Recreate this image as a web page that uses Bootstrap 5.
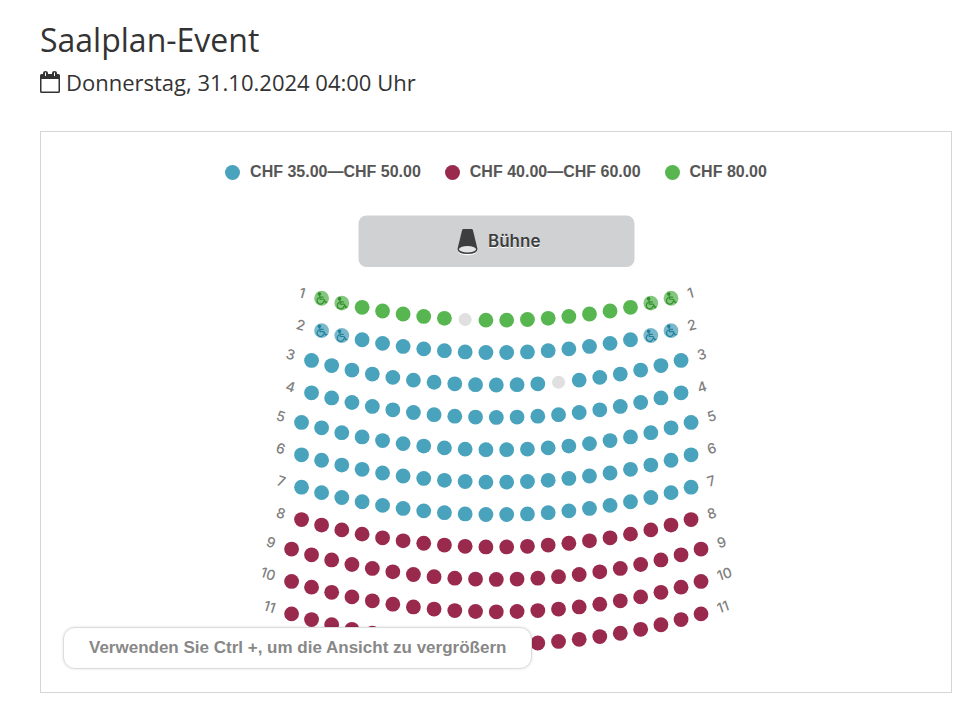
<!DOCTYPE html>
<html lang="de">
<head>
<meta charset="utf-8">
<meta name="viewport" content="width=device-width, initial-scale=1">
<title>Saalplan-Event</title>
<link rel="stylesheet" href="https://cdn.jsdelivr.net/npm/bootstrap@5.3.0/dist/css/bootstrap.min.css">
<style>
  body { font-family: "Open Sans", sans-serif; color: #333; background: #fff; }
  .page { padding: 19px 18px 19px 40px; }
  .event-title { font-size: 32px; line-height: 42px; font-weight: 400; }
  .event-date { font-size: 22px; line-height: 42px; font-weight: 400; gap: 6px; }
  .plan { border: 1px solid #d5d5d5; }
  .legend-list { gap: 24px; padding-top: 28px; font: bold 16px/24px "Liberation Sans", Arial, sans-serif; color: #565656; }
  .legend-entry { gap: 10px; }
  .dot { width: 15px; height: 15px; border-radius: 50%; }
  .dot-blue { background: #49a3bc; }
  .dot-red { background: #992a4d; }
  .dot-green { background: #58b651; }
  .blue { fill: #49a3bc; }
  .red { fill: #992a4d; }
  .green { fill: #58b651; }
  .taken { fill: #e0e0e0; }
  .access-blue { fill: #79b8ca; color: #21809b; }
  .access-green { fill: #83c67e; color: #308f2a; }
  .row-label { font: 500 14px Inter, sans-serif; fill: #808080; }
  .stage-label { font: 600 17px Inter, sans-serif; fill: #3d3e40; }
  .stage-shine { fill: #fff; }
  .zoom-hint { left: 22px; bottom: 23px; padding: 8px 25px; border: 1px solid #dcdcdc; border-radius: 12px; background: #fff; box-shadow: 0 0 3px rgba(0,0,0,.12); color: #888; font: bold 17px/24px "Liberation Sans", Arial, sans-serif; }
</style>
</head>
<body>
<main class="page">
  <h1 class="event-title m-0">Saalplan-Event</h1>
  <p class="event-date d-flex align-items-center m-0 mb-4 pb-1">
    <svg width="20" height="22" viewBox="0 0 20 22" aria-hidden="true"><path fill="#333" fill-rule="evenodd" d="M2 3H3V2Q3 0 5.500 0T8 2V3H12V2Q12 0 14.500 0T17 2V3H18.500Q20 3 20 4.500V20.500Q20 22 18.500 22H1.500Q0 22 0 20.500V4.500Q0 3 1.500 3ZM1.500 8V20.500H18.500V8ZM5 1.500V5H6V1.500ZM14 1.500V5H15V1.500Z"/></svg>
    <span>Donnerstag, 31.10.2024 04:00 Uhr</span>
  </p>
  <section class="plan position-relative" aria-label="Saalplan">
    <ul class="legend-list list-unstyled d-flex flex-wrap justify-content-center m-0">
      <li class="legend-entry d-flex align-items-center"><span class="dot dot-blue"></span>CHF 35.00—CHF 50.00</li>
      <li class="legend-entry d-flex align-items-center"><span class="dot dot-red"></span>CHF 40.00—CHF 60.00</li>
      <li class="legend-entry d-flex align-items-center"><span class="dot dot-green"></span>CHF 80.00</li>
    </ul>
    <svg id="hall" class="d-block w-100" viewBox="0 0 910 508" role="img" aria-label="Sitzplätze">
      <defs>
        <g id="wheelchair" fill="none" stroke="currentColor" stroke-width="1.200" stroke-linecap="round" stroke-linejoin="round">
          <circle cx="-2.200" cy="-4.300" r="1.200" fill="currentColor"/>
          <path d="M-2-3L-1.500 1H2.300L4 4.300L5.200 3.800M-1.600-1.200H1.500M-3-.4A3.400 3.400 0 1 0 2.200 3.200"/>
        </g>
      </defs>
      <rect x="317.500" y="31.500" width="276" height="51.500" rx="8" fill="#d0d1d3"/>
      <g transform="translate(426.500 57)">
        <path fill="#fff" d="M-10 8L10 8Q10 14.200 0 14.200T-10 8Z"/>
        <path fill="#3d3e40" d="M-4-12H4Q5-12 5.400-11L10 8Q10 13 0 13T-10 8L-5.400-11Q-5-12-4-12Z"/>
        <ellipse cy="8.300" rx="8.500" ry="3.200" fill="#e4e4e5"/>
      </g>
      <text class="stage-label stage-shine" x="447" y="64">Bühne</text>
      <text class="stage-label" x="447" y="63">Bühne</text>
    </svg>
    <div class="zoom-hint position-absolute">Verwenden Sie Ctrl +, um die Ansicht zu vergrößern</div>
  </section>
</main>
<script>
  const hall = document.getElementById('hall');
  const ns = 'http://www.w3.org/2000/svg';
  const radius = 706, step = 20.770 / radius, centreX = 455.300, firstY = 136.200, pitch = 32.400;
  const seatCounts = [18, 18, 19, 19, 20, 20, 20, 20, 21, 21, 21];
  const taken = { 0: 7, 2: 12 };

  function add(name, attrs) {
    const el = document.createElementNS(ns, name);
    for (const key in attrs) el.setAttribute(key, attrs[key]);
    hall.append(el);
    return el;
  }
  function place(row, angle) {
    return [
      centreX + radius * Math.sin(angle),
      firstY + row * pitch - radius * (1 - Math.cos(angle))
    ];
  }

  seatCounts.forEach((count, row) => {
    const half = (count - 1) / 2;
    const colour = row === 0 ? 'green' : row < 7 ? 'blue' : 'red';
    for (let i = 0; i < count; i++) {
      const [x, y] = place(row, (i - half) * step);
      const accessible = row < 2 && (i < 2 || i > count - 3);
      const kind = taken[row] === i ? 'taken' : accessible ? 'access-' + colour : colour;
      add('circle', { cx: x, cy: y, r: kind === 'taken' ? 6.500 : 7.400, class: kind });
      if (accessible) add('use', { href: '#wheelchair', x, y, class: kind });
    }
    for (const side of [-1, 1]) {
      const angle = side * (half + .830) * step;
      const [x, y] = place(row, angle);
      add('text', {
        class: 'row-label', y: 5, 'text-anchor': side < 0 ? 'end' : 'start',
        transform: `translate(${x} ${y}) rotate(${-angle * 180 / Math.PI})`
      }).textContent = row + 1;
    }
  });
</script>
<script src="https://cdn.jsdelivr.net/npm/bootstrap@5.3.0/dist/js/bootstrap.bundle.min.js"></script>
</body>
</html>
